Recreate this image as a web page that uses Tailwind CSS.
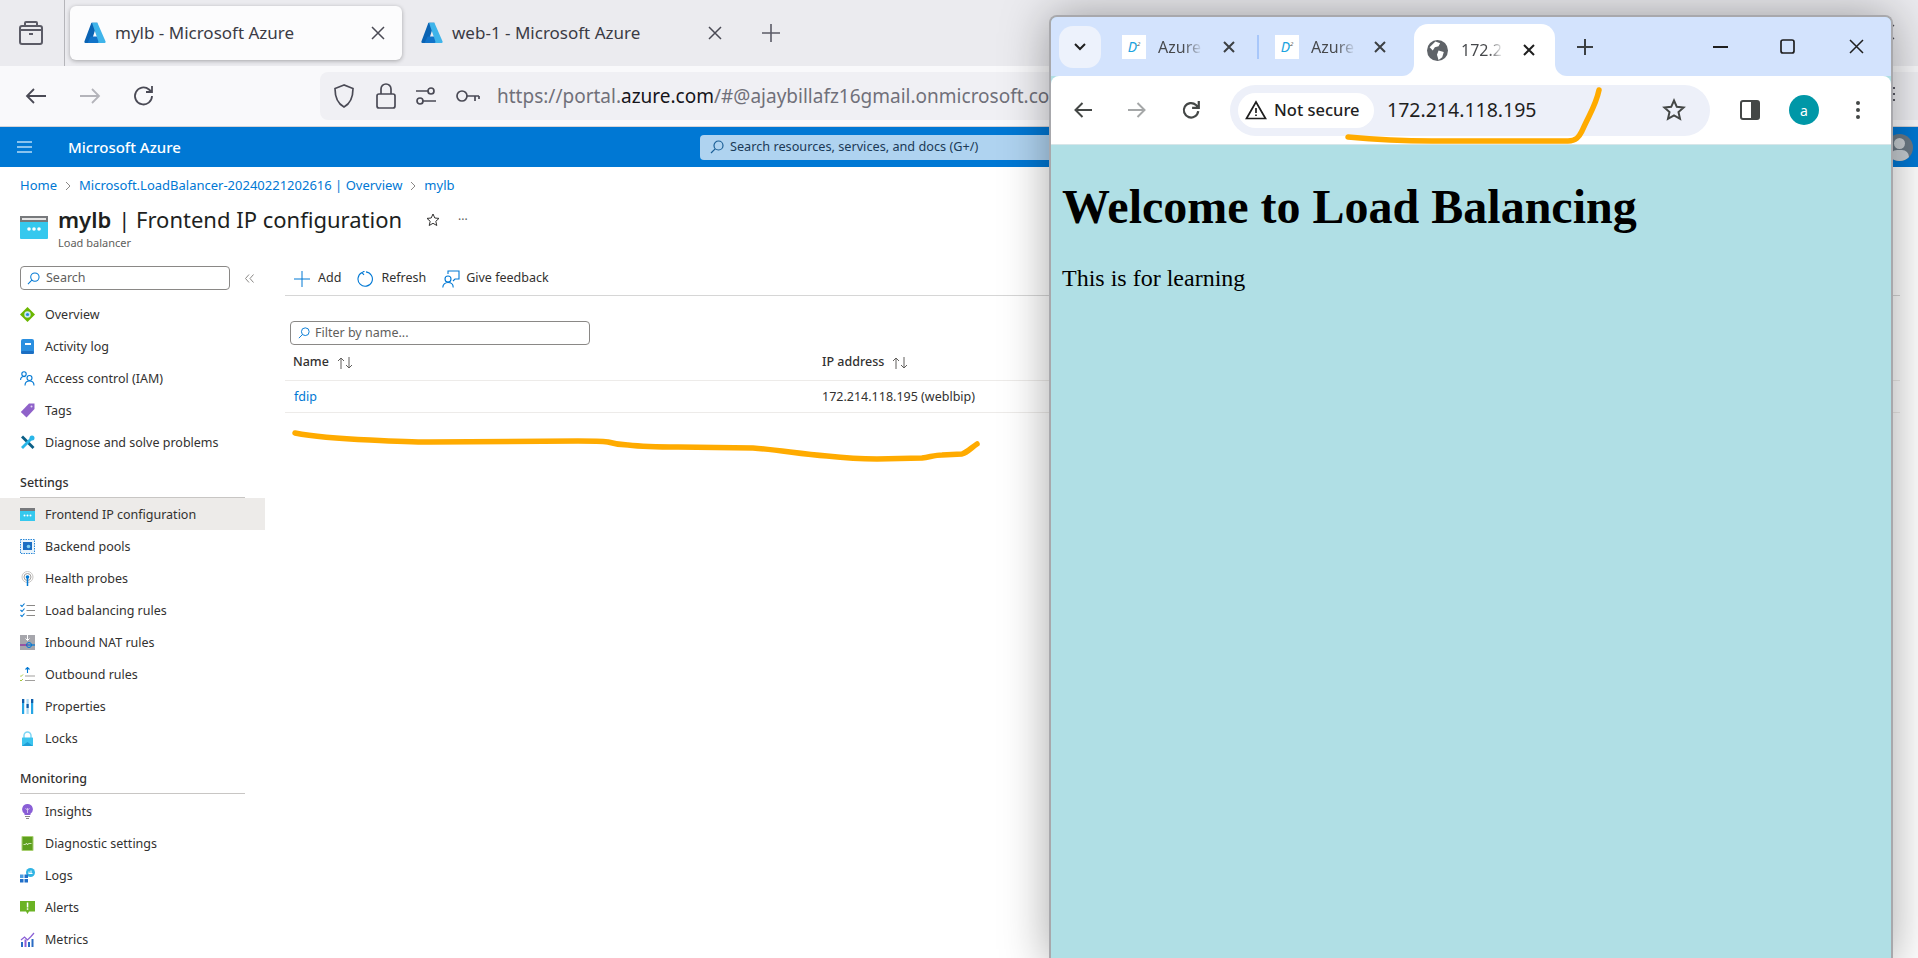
<!DOCTYPE html>
<html lang="en">
<head>
  <meta charset="UTF-8" />
  <title>mylb - Microsoft Azure</title>
  <script src="https://cdn.jsdelivr.net/npm/@tailwindcss/browser@4"></script>
</head>
<body class="relative w-[1918px] h-[958px] overflow-hidden bg-white font-['Noto_Sans',sans-serif] text-[#323130]">

  <!-- Firefox tab strip -->
  <div class="flex items-center h-[66px] bg-[#ebebef]">
    <div class="flex items-center justify-center w-[65px] h-full border-r border-[#b5b5ba] pr-[3px]">
      <svg class="w-[24px] h-[26px]" viewBox="0 0 24 26" fill="none" stroke="#5b5b66" stroke-width="2"><path d="M6 5V3a1 1 0 0 1 1-1h10a1 1 0 0 1 1 1v2"/><rect x="1" y="6" width="22" height="18" rx="2"/><path d="M1 10h22"/><path d="M10 14h4"/></svg>
    </div>
    <div class="flex items-center w-[332px] h-[54px] ml-[5px] pl-[14px] bg-[#fcfcfd] rounded-md shadow-[0_1px_4px_rgba(0,0,0,0.3)]">
      <svg class="w-[22px] h-[22px] shrink-0" viewBox="0 0 22 22"><path d="M7.4.8h6L7.2 20.2a1 1 0 0 1-1 .7H1.3a1 1 0 0 1-.9-1.3z" fill="#0a63b3"/><path d="M16.6 14.4H6.6l-3 6.5h14.6z" fill="#1173c9"/><path d="M13.4.8 21.6 19.6a1 1 0 0 1-.9 1.3h-7.2a1 1 0 0 0 .9-1.3L8 .8z" fill="#3fb4ea"/></svg>
      <span class="ml-[9px] text-[17px] text-[#3b3b45] whitespace-nowrap">mylb - Microsoft Azure</span>
      <svg class="w-[14px] h-[14px] ml-auto mr-[17px]" viewBox="0 0 14 14" stroke="#4a4a55" stroke-width="1.5"><path d="M1 1l12 12M13 1 1 13"/></svg>
    </div>
    <div class="flex items-center w-[332px] h-[54px] ml-[5px] pl-[14px]">
      <svg class="w-[22px] h-[22px] shrink-0" viewBox="0 0 22 22"><path d="M7.4.8h6L7.2 20.2a1 1 0 0 1-1 .7H1.3a1 1 0 0 1-.9-1.3z" fill="#0a63b3"/><path d="M16.6 14.4H6.6l-3 6.5h14.6z" fill="#1173c9"/><path d="M13.4.8 21.6 19.6a1 1 0 0 1-.9 1.3h-7.2a1 1 0 0 0 .9-1.3L8 .8z" fill="#3fb4ea"/></svg>
      <span class="ml-[9px] text-[17px] text-[#3b3b45] whitespace-nowrap">web-1 - Microsoft Azure</span>
      <svg class="w-[14px] h-[14px] ml-auto mr-[17px]" viewBox="0 0 14 14" stroke="#4a4a55" stroke-width="1.5"><path d="M1 1l12 12M13 1 1 13"/></svg>
    </div>
    <svg class="w-[20px] h-[20px] ml-[22px]" viewBox="0 0 20 20" stroke="#5b5b66" stroke-width="1.6"><path d="M10 1v18M1 10h18"/></svg>
    <svg class="w-[16px] h-[16px] ml-auto mr-[23px] mb-[2px]" viewBox="0 0 16 16" stroke="#4a4a55" stroke-width="1.2"><path d="m1 1 14 14M15 1 1 15"/></svg>
  </div>

  <!-- Firefox address row -->
  <div class="relative flex items-center h-[61px] bg-[#f9f9fb] border-b border-[#d4d4d8]">
    <div class="flex items-center w-[320px] shrink-0 pl-[24px] gap-[30px]">
      <svg class="w-[24px] h-[24px]" viewBox="0 0 24 24" fill="none" stroke="#4a4a55" stroke-width="1.8"><path d="M22 12H3M10 5l-7 7 7 7"/></svg>
      <svg class="w-[24px] h-[24px]" viewBox="0 0 24 24" fill="none" stroke="#b4b4ba" stroke-width="1.8"><path d="M2 12h19M14 5l7 7-7 7"/></svg>
      <svg class="w-[24px] h-[24px]" viewBox="0 0 24 24" fill="none" stroke="#4a4a55" stroke-width="1.8"><path d="M20 12a8.5 8.5 0 1 1-3-6.5L20 8M20 2v6h-6"/></svg>
    </div>
    <div class="flex items-center flex-1 h-[48px] bg-[#f0f0f4] rounded-l-lg pl-[12px] text-[19px] whitespace-nowrap overflow-hidden">
      <svg class="w-[24px] h-[26px] shrink-0" viewBox="0 0 24 26" fill="none" stroke="#4a4a55" stroke-width="1.7"><path d="M12 2 3 5.5c0 8 1.5 14.500 9 18.500 7.500-4 9-10.500 9-18.500z"/></svg>
      <svg class="w-[20px] h-[26px] shrink-0 ml-[20px]" viewBox="0 0 20 26" fill="none" stroke="#4a4a55" stroke-width="1.7"><rect x="1" y="11" width="18" height="14" rx="2"/><path d="M5 11V6a5 5 0 0 1 10 0v5"/></svg>
      <svg class="w-[22px] h-[20px] shrink-0 ml-[19px]" viewBox="0 0 22 20" fill="none" stroke="#4a4a55" stroke-width="1.7"><circle cx="16" cy="5" r="3"/><path d="M1 5h12"/><circle cx="5" cy="15" r="3"/><path d="M8 15h13"/></svg>
      <svg class="w-[24px] h-[14px] shrink-0 ml-[19px]" viewBox="0 0 24 14" fill="none" stroke="#4a4a55" stroke-width="1.7"><circle cx="6" cy="7" r="5"/><path d="M11 7h12M19 7v5M23 7v3"/></svg>
      <span class="ml-[17px] text-[#70707a]">https://portal.<span class="text-[#15141a]">azure.com</span>/#@ajaybillafz16gmail.onmicrosoft.com/resource</span>
    </div>
    <svg class="absolute left-[1890px] top-[21px] w-[5px] h-[15px]" viewBox="0 0 5 15" fill="#5b5b66"><rect width="5" height="2"/><rect y="6" width="5" height="2"/><rect y="12" width="5" height="2"/></svg>
  </div>

  <!-- Azure top bar -->
  <div class="flex items-center h-[40px] bg-[#0078d4] text-white">
    <svg class="w-[15px] h-[12px] ml-[17px]" viewBox="0 0 15 12" fill="none" stroke="#b7dcf6" stroke-width="1.5"><path d="M0 1h15M0 6h15M0 11h15"/></svg>
    <span class="ml-[36px] w-[632px] text-[15px] font-medium">Microsoft Azure</span>
    <div class="flex items-center w-[1170px] h-[25px] bg-[#afd3f0] rounded-sm pl-[10px] text-[12.7px] text-[#1b3a57]">
      <svg class="w-[14px] h-[14px]" viewBox="0 0 14 14" fill="none" stroke="#1b5f96" stroke-width="1.2"><circle cx="8.500" cy="5.500" r="4.500"/><path d="M5.200 8.800 1 13"/></svg>
      <span class="ml-[6px]">Search resources, services, and docs (G+/)</span>
    </div>
    <div class="relative ml-auto mr-[5px] w-[27px] h-[27px] rounded-full bg-[#6c7a86] overflow-hidden">
      <div class="absolute top-[4px] left-[8px] w-[11px] h-[11px] rounded-full bg-[#c8ced3]"></div>
      <div class="absolute top-[16px] left-[4px] w-[19px] h-[14px] rounded-full bg-[#c8ced3]"></div>
    </div>
  </div>

  <!-- Breadcrumb -->
  <div class="flex items-center h-[37px] pl-[20px] text-[13px] text-[#0078d4] whitespace-nowrap">
    <span>Home</span>
    <svg class="w-[6px] h-[10px] mx-[8px]" viewBox="0 0 6 10" fill="none" stroke="#8a8886"><path d="m1 1 4 4-4 4"/></svg>
    <span>Microsoft.LoadBalancer-20240221202616 | Overview</span>
    <svg class="w-[6px] h-[10px] mx-[8px]" viewBox="0 0 6 10" fill="none" stroke="#8a8886"><path d="m1 1 4 4-4 4"/></svg>
    <span>mylb</span>
  </div>

  <!-- Blade title -->
  <div class="relative h-[47px] pl-[58px]">
    <svg class="absolute left-[20px] top-[12px] w-[28px] h-[23px]" viewBox="0 0 28 23"><rect width="28" height="23" rx="1" fill="#35c8ee"/><rect width="28" height="6" fill="#77797c"/><rect x="2" y="2" width="24" height="2" fill="#e6e6e6"/><circle cx="9" cy="13" r="1.800" fill="#fff"/><circle cx="14" cy="13" r="1.800" fill="#fff"/><circle cx="19" cy="13" r="1.800" fill="#fff"/></svg>
    <div class="flex items-center h-[31px] text-[22px] text-[#201f1e] whitespace-nowrap">
      <span class="font-semibold">mylb</span><span class="ml-[7px]">| Frontend IP configuration</span>
      <svg class="w-[14px] h-[14px] ml-[24px]" viewBox="0 0 14 14" fill="none" stroke="#323130"><path d="m7 1 1.800 4 4.200.4-3.200 2.900 1 4.200L7 10.300l-3.800 2.200 1-4.200L1 5.400 5.200 5z"/></svg>
      <span class="ml-[18px] text-[12px] text-[#605e5c] leading-none">···</span>
    </div>
    <div class="text-[11px] leading-[16px] text-[#605e5c]">Load balancer</div>
  </div>

  <div class="flex">
    <!-- Resource menu -->
    <aside class="w-[265px] shrink-0 pt-[15px] text-[12.5px]">
      <div class="flex items-center pl-[20px]">
        <div class="flex items-center w-[210px] h-[24px] border border-[#8a8886] rounded-sm pl-[6px] text-[#605e5c]">
          <svg class="w-[13px] h-[13px]" viewBox="0 0 14 14" fill="none" stroke="#0078d4" stroke-width="1.100"><circle cx="8.500" cy="5.500" r="4.500"/><path d="M5.200 8.800 1 13"/></svg>
          <span class="ml-[6px]">Search</span>
        </div>
        <svg class="w-[9px] h-[9px] ml-[15px]" viewBox="0 0 9 9" fill="none" stroke="#8a8886"><path d="M4 .5.500 4.500 4 8.500M8.500 .5 5 4.500l3.500 4"/></svg>
      </div>
      <nav class="mt-[8px] [&_span]:pt-[2px]">
        <a class="flex items-center h-[32px] pl-[20px]"><svg class="w-[15px] h-[15px] shrink-0" viewBox="0 0 15 15"><path d="M7.500 0 15 7.500 7.500 15 0 7.500z" fill="#6bb700"/><circle cx="7.500" cy="7.500" r="3.200" fill="#cfe8f5"/><circle cx="7.500" cy="7.500" r="1.600" fill="#2b88d8"/></svg><span class="ml-[10px]">Overview</span></a>
        <a class="flex items-center h-[32px] pl-[20px]"><svg class="w-[15px] h-[15px] shrink-0" viewBox="0 0 15 15"><rect x="1" width="13" height="15" rx="2" fill="#2b8fe0"/><rect x="1" y="12" width="13" height="3" rx="1.500" fill="#1b6ec2"/><rect x="5" y="4" width="6" height="2" fill="#fff"/></svg><span class="ml-[10px]">Activity log</span></a>
        <a class="flex items-center h-[32px] pl-[20px]"><svg class="w-[15px] h-[15px] shrink-0" viewBox="0 0 15 15" fill="none" stroke="#0078d4" stroke-width="1.100"><circle cx="4" cy="3" r="2.200"/><path d="M.6 9c0-2 1.500-3.500 3.400-3.500 .6 0 1 .1 1.500.3"/><circle cx="9.500" cy="7" r="2.500"/><path d="M5 14.500c0-3 2-4.500 4.500-4.500s4.500 1.500 4.500 4.500"/></svg><span class="ml-[10px]">Access control (IAM)</span></a>
        <a class="flex items-center h-[32px] pl-[20px]"><svg class="w-[15px] h-[15px] shrink-0" viewBox="0 0 15 15"><path d="M9 .5h5.500V6L6.500 14.500.8 9z" fill="#8f62c9"/><circle cx="11.500" cy="3.500" r="1" fill="#e2d5f3"/></svg><span class="ml-[10px]">Tags</span></a>
        <a class="flex items-center h-[32px] pl-[20px]"><svg class="w-[15px] h-[15px] shrink-0" viewBox="0 0 15 15" fill="none" stroke-width="2.800"><path d="M2 1.500 13.500 13" stroke="#0b5f86"/><path d="M13 2 2 13" stroke="#29b6e8"/><circle cx="12" cy="3" r="2.500" fill="#29b6e8" stroke="none"/></svg><span class="ml-[10px]">Diagnose and solve problems</span></a>

        <div class="h-[40px] mx-[20px] pt-[17px] leading-[16px] font-medium border-b border-[#c8c6c4]">Settings</div>
        <a class="flex items-center h-[32px] pl-[20px] bg-[#edebe9]"><svg class="w-[15px] h-[13px] shrink-0" viewBox="0 0 15 13"><rect width="15" height="13" fill="#35c8ee"/><rect width="15" height="3" fill="#77797c"/><circle cx="4.500" cy="7.500" r="1" fill="#fff"/><circle cx="7.500" cy="7.500" r="1" fill="#fff"/><circle cx="10.500" cy="7.500" r="1" fill="#fff"/></svg><span class="ml-[10px]">Frontend IP configuration</span></a>
        <a class="flex items-center h-[32px] pl-[20px]"><svg class="w-[15px] h-[15px] shrink-0" viewBox="0 0 15 15"><rect x=".5" y=".5" width="14" height="14" fill="#eaf4fb" stroke="#2b88d8" stroke-dasharray="1.500 1"/><rect x="3" y="3" width="9" height="8" fill="#1b6ec2"/><circle cx="8.500" cy="7.500" r="1.800" fill="#7fd0f2"/></svg><span class="ml-[10px]">Backend pools</span></a>
        <a class="flex items-center h-[32px] pl-[20px]"><svg class="w-[15px] h-[15px] shrink-0" viewBox="0 0 15 15" fill="none"><circle cx="7.500" cy="6" r="5.500" stroke="#c8c6c4"/><circle cx="7.500" cy="6" r="3.500" stroke="#a19f9d"/><circle cx="7.500" cy="6" r="1.800" fill="#0078d4"/><path d="M7.500 7v8" stroke="#0078d4" stroke-width="1.500"/></svg><span class="ml-[10px]">Health probes</span></a>
        <a class="flex items-center h-[32px] pl-[20px]"><svg class="w-[15px] h-[15px] shrink-0" viewBox="0 0 15 15" fill="none" stroke-width="1.100"><path d="m.5 2 1.500 1.500L4.500.5M.5 7 2 8.500l2.500-3M.5 12 2 13.500l2.500-3" stroke="#0078d4"/><path d="M6.500 2.500H15M6.500 7.500H15M6.500 12.500H15" stroke="#8a8886"/></svg><span class="ml-[10px]">Load balancing rules</span></a>
        <a class="flex items-center h-[32px] pl-[20px]"><svg class="w-[15px] h-[15px] shrink-0" viewBox="0 0 15 15" fill="none"><rect width="15" height="15" fill="#a6a6ac"/><path d="M7.500 0v5M5.500 3.500l2 2 2-2" stroke="#fff"/><path d="M0 10h8" stroke="#8b1e9e" stroke-width="1.200"/><path d="M8 10h7" stroke="#0078d4" stroke-width="1.200"/><circle cx="9" cy="10" r="2.500" stroke="#0078d4"/></svg><span class="ml-[10px]">Inbound NAT rules</span></a>
        <a class="flex items-center h-[32px] pl-[20px]"><svg class="w-[15px] h-[15px] shrink-0" viewBox="0 0 15 15" fill="none"><path d="M7.500 6V.5M5.500 2.500l2-2 2 2" stroke="#0078d4" stroke-width="1.100"/><path d="M5 9h10M5 13.500h10" stroke="#a19f9d"/><path d="m0 8.500 1 1 2-2M0 13l1 1 2-2" stroke="#a4c639"/></svg><span class="ml-[10px]">Outbound rules</span></a>
        <a class="flex items-center h-[32px] pl-[20px]"><svg class="w-[15px] h-[15px] shrink-0" viewBox="0 0 15 15"><rect x="2" width="2.200" height="15" fill="#27a6e5"/><rect x="6.500" width="2.200" height="15" fill="#a9d8f3"/><rect x="11" width="2.200" height="15" fill="#27a6e5"/><rect x="2" width="2.200" height="4" fill="#0f5ca8"/><rect x="6.500" y="5" width="2.200" height="4" fill="#0f5ca8"/><rect x="11" width="2.200" height="4" fill="#0f5ca8"/></svg><span class="ml-[10px]">Properties</span></a>
        <a class="flex items-center h-[32px] pl-[20px]"><svg class="w-[15px] h-[15px] shrink-0" viewBox="0 0 15 15" fill="none"><path d="M4 7V4.500a3.500 3.500 0 0 1 7 0V7" stroke="#7fd6f5" stroke-width="1.500"/><rect x="2" y="6.500" width="11" height="8.500" rx=".5" fill="#3cc4ee"/><path d="m2 15 5.500-4 5.500 4z" fill="#1e9ed6"/></svg><span class="ml-[10px]">Locks</span></a>

        <div class="h-[40px] mx-[20px] pt-[17px] leading-[16px] font-medium border-b border-[#c8c6c4] mb-px">Monitoring</div>
        <a class="flex items-center h-[32px] pl-[20px]"><svg class="w-[15px] h-[15px] shrink-0" viewBox="0 0 15 15"><path d="M7.500 0a5.300 5.300 0 0 1 3 9.700V11h-6V9.700A5.300 5.300 0 0 1 7.500 0z" fill="#8a5fd6"/><path d="M5 12h5v1H5zM6 14h3v1H6z" fill="#8a8886"/><path d="M7.500 4v5M5.500 4.500l2 1.500 2-1.500" stroke="#e2d5f3" fill="none" stroke-width=".8"/></svg><span class="ml-[10px]">Insights</span></a>
        <a class="flex items-center h-[32px] pl-[20px]"><svg class="w-[15px] h-[15px] shrink-0" viewBox="0 0 15 15"><rect x="1.500" width="12" height="15" rx="1" fill="#a8cf70"/><rect x="2.500" y="1" width="10" height="13" fill="#5ea01e"/><path d="m3.500 8.500 2 0 1-1.500 1 2 1-1.500h3" stroke="#e8f5d8" fill="none" stroke-width=".8"/></svg><span class="ml-[10px]">Diagnostic settings</span></a>
        <a class="flex items-center h-[32px] pl-[20px]"><svg class="w-[15px] h-[15px] shrink-0" viewBox="0 0 15 15"><circle cx="10.500" cy="4.500" r="4.500" fill="#30b4e4"/><path d="M8.500 5.500h4M9 3.500v2M11 2.500v3" stroke="#fff" fill="none"/><rect y="6.500" width="3.500" height="3.500" fill="#4a9be0"/><rect x="4.500" y="6.500" width="3.500" height="3.500" fill="#1f6ec9"/><rect y="11" width="3.500" height="3.500" fill="#1f6ec9"/><rect x="4.500" y="11" width="3.500" height="3.500" fill="#1f6ec9"/></svg><span class="ml-[10px]">Logs</span></a>
        <a class="flex items-center h-[32px] pl-[20px]"><svg class="w-[15px] h-[15px] shrink-0" viewBox="0 0 15 15"><path d="M0 1h15v10.500H9l-1.500 2.500L6 11.500H0z" fill="#6bb324"/><rect x="6.800" y="2.500" width="1.500" height="5" fill="#fff"/><rect x="6.800" y="8.300" width="1.500" height="1.500" fill="#fff"/></svg><span class="ml-[10px]">Alerts</span></a>
        <a class="flex items-center h-[32px] pl-[20px]"><svg class="w-[15px] h-[15px] shrink-0" viewBox="0 0 15 15" fill="none"><path d="M1 8l3.500-3 3 3 3.500-3.500L14 1" stroke="#8a5fd6" stroke-width="1.200"/><rect x="1" y="10" width="2" height="5" fill="#2b6cc4"/><rect x="4.500" y="7.500" width="2" height="7.500" fill="#8a5fd6"/><rect x="8" y="10" width="2" height="5" fill="#2b6cc4"/><rect x="11.500" y="7" width="2" height="8" fill="#2b6cc4"/></svg><span class="ml-[10px]">Metrics</span></a>
      </nav>
    </aside>

    <!-- Blade content -->
    <main class="flex-1 ml-[20px] mr-[18px] text-[12.5px]">
      <div class="flex items-center h-[45px] pt-[11px] pl-[9px] border-b border-[#d6d6d6]">
        <svg class="w-[16px] h-[16px]" viewBox="0 0 16 16" stroke="#0078d4"><path d="M8 0v16M0 8h16"/></svg>
        <span class="ml-[8px]">Add</span>
        <svg class="w-[16px] h-[16px] ml-[16px]" viewBox="0 0 16 16" fill="none" stroke="#0078d4" stroke-width="1.100"><path d="M5 1.600A7.200 7.200 0 1 0 9 .9M5 1.600 7.500 0M5 1.600l2 2.200"/></svg>
        <span class="ml-[8px]">Refresh</span>
        <svg class="w-[18px] h-[18px] ml-[16px]" viewBox="0 0 18 18" fill="none" stroke="#0078d4" stroke-width="1.100"><circle cx="6" cy="9" r="3"/><path d="M.8 17.500c0-3 2.200-5 5.200-5s5.200 2 5.200 5M6 4V1h11v8h-4l-2 2"/></svg>
        <span class="ml-[6px]">Give feedback</span>
      </div>
      <div class="flex items-center w-[300px] h-[24px] mt-[25px] ml-[5px] border border-[#8a8886] rounded-sm pl-[7px] text-[#605e5c]">
        <svg class="w-[12px] h-[12px]" viewBox="0 0 14 14" fill="none" stroke="#0078d4" stroke-width="1.100"><circle cx="8.500" cy="5.500" r="4.500"/><path d="M5.200 8.800 1 13"/></svg>
        <span class="ml-[5px]">Filter by name...</span>
      </div>
      <div class="grid grid-cols-[537px_1fr] h-[36px] items-center border-b border-[#edebe9] font-medium">
        <div class="flex items-center pl-[8px]">Name
          <svg class="w-[16px] h-[12px] ml-[8px]" viewBox="0 0 16 12" fill="none" stroke="#605e5c"><path d="M4 12V1M1 4l3-3 3 3M12 0v11M9 8l3 3 3-3"/></svg>
        </div>
        <div class="flex items-center">IP address
          <svg class="w-[16px] h-[12px] ml-[8px]" viewBox="0 0 16 12" fill="none" stroke="#605e5c"><path d="M4 12V1M1 4l3-3 3 3M12 0v11M9 8l3 3 3-3"/></svg>
        </div>
      </div>
      <div class="grid grid-cols-[537px_1fr] h-[32px] pt-[2px] items-center border-b border-[#edebe9]">
        <div class="pl-[9px] text-[#0078d4]">fdip</div>
        <div class="whitespace-nowrap">172.214.118.195 (weblbip)</div>
      </div>
    </main>
  </div>

  <!-- Chrome window on top of the portal -->
  <div class="absolute left-[1049px] top-[15px] w-[844px] h-[950px] flex flex-col rounded-t-lg border-x-2 border-t-2 border-[#a8a8ac] bg-[#b0dfe5] shadow-[0_0_48px_rgba(0,0,0,0.35)] overflow-hidden">
    <div class="flex items-center h-[59px] shrink-0 bg-[#d3e3fd] text-[#1f1f1f]">
      <div class="flex items-center justify-center w-[42px] h-[42px] ml-[8px] rounded-[14px] bg-[#edf2fc]">
        <svg class="w-[12px] h-[8px]" viewBox="0 0 12 8" fill="none" stroke="#1f1f1f" stroke-width="2"><path d="m1 1 5 5 5-5"/></svg>
      </div>
      <div class="flex items-center justify-center w-[24px] h-[24px] ml-[21px] bg-white text-[#1aa3e0] text-[14px] italic">D<sup class="text-[6px] text-[#555]">2</sup></div>
      <span class="ml-[12px] w-[45px] text-[16px] overflow-hidden bg-linear-to-r from-[#45474a] from-55% to-[#d3e3fd] bg-clip-text text-transparent">Azure</span>
      <svg class="w-[12px] h-[12px] ml-[20px]" viewBox="0 0 12 12" stroke="#3c4043" stroke-width="2"><path d="m1 1 10 10M11 1 1 11"/></svg>
      <div class="w-[2px] h-[24px] ml-[22px] bg-[#a8c7fa]"></div>
      <div class="flex items-center justify-center w-[24px] h-[24px] ml-[16px] bg-white text-[#1aa3e0] text-[14px] italic">D<sup class="text-[6px] text-[#555]">2</sup></div>
      <span class="ml-[12px] w-[45px] text-[16px] overflow-hidden bg-linear-to-r from-[#45474a] from-55% to-[#d3e3fd] bg-clip-text text-transparent">Azure</span>
      <svg class="w-[12px] h-[12px] ml-[18px]" viewBox="0 0 12 12" stroke="#3c4043" stroke-width="2"><path d="m1 1 10 10M11 1 1 11"/></svg>
      <div class="relative flex items-center self-end w-[141px] h-[52px] ml-[28px] pl-[13px] bg-white rounded-t-[14px]">
        <div class="absolute bottom-0 left-[-12px] w-[12px] h-[12px] bg-white"><div class="w-full h-full rounded-br-xl bg-[#d3e3fd]"></div></div>
        <div class="absolute bottom-0 right-[-12px] w-[12px] h-[12px] bg-white"><div class="w-full h-full rounded-bl-xl bg-[#d3e3fd]"></div></div>
        <svg class="w-[21px] h-[21px] shrink-0" viewBox="0 0 20 20"><circle cx="10" cy="10" r="10" fill="#5f6368"/><path d="M8 1.500 12.500 3 11 6 7.500 7l-2 3-3-3zM11 10l5 1.500-1.500 5L11 19l-1.500-5z" fill="#fff"/></svg>
        <span class="ml-[13px] text-[16px] w-[42px] overflow-hidden bg-linear-to-r from-[#45474a] from-65% to-white bg-clip-text text-transparent">172.2</span>
        <svg class="w-[12px] h-[12px] ml-[20px]" viewBox="0 0 12 12" stroke="#1f1f1f" stroke-width="2"><path d="m1 1 10 10M11 1 1 11"/></svg>
      </div>
      <svg class="w-[16px] h-[16px] ml-[22px]" viewBox="0 0 16 16" stroke="#3c4043" stroke-width="2"><path d="M8 0v16M0 8h16"/></svg>
      <svg class="w-[15px] h-[2px] ml-[120px]" viewBox="0 0 15 2"><rect width="15" height="2" fill="#1f1f1f"/></svg>
      <svg class="w-[15px] h-[15px] ml-[52px]" viewBox="0 0 15 15" fill="none" stroke="#1f1f1f" stroke-width="1.700"><rect x="1" y="1" width="13" height="13" rx="2"/></svg>
      <svg class="w-[15px] h-[15px] ml-[54px]" viewBox="0 0 15 15" stroke="#1f1f1f" stroke-width="1.500"><path d="m1 1 13 13M14 1 1 14"/></svg>
    </div>
    <div class="flex items-center h-[69px] shrink-0 bg-white rounded-t-lg border-b border-[#d7e6e9]">
      <svg class="w-[18px] h-[16px] ml-[23px]" viewBox="0 0 18 16" fill="none" stroke="#444746" stroke-width="2"><path d="M18 8H2M8.500 1 1.500 8l7 7"/></svg>
      <svg class="w-[18px] h-[16px] ml-[36px]" viewBox="0 0 18 16" fill="none" stroke="#a5a7a8" stroke-width="2"><path d="M0 8h16M9.500 1l7 7-7 7"/></svg>
      <svg class="w-[20px] h-[20px] ml-[35px]" viewBox="0 0 18 18" fill="none" stroke="#444746" stroke-width="2"><path d="M15.500 10a6.500 6.500 0 1 1-2-5.500L16 7M16 1v6h-6"/></svg>
      <div class="flex items-center w-[480px] h-[51px] ml-[29px] rounded-full bg-[#edf0f9] pl-[8px]">
        <div class="flex items-center w-[136px] h-[35px] rounded-full bg-white pl-[7px] text-[16.500px] font-medium text-[#1f1f1f] whitespace-nowrap">
          <svg class="w-[22px] h-[20px] shrink-0" viewBox="0 0 22 20" fill="none" stroke="#1f1f1f" stroke-width="1.700"><path d="M11 2 1.500 18.500h19z"/><path d="M11 8v5M11 14.500v1.500"/></svg>
          <span class="ml-[7px]">Not secure</span>
        </div>
        <span class="ml-[13px] text-[19.500px] text-[#1f1f1f]">172.214.118.195</span>
        <svg class="w-[24px] h-[24px] ml-auto mr-[24px]" viewBox="0 0 24 24" fill="none" stroke="#444746" stroke-width="2"><path d="m12 2.500 2.800 6.300 6.800.7-5.100 4.600 1.500 6.700L12 17.300l-6 3.500 1.500-6.700-5.100-4.600 6.800-.7z"/></svg>
      </div>
      <svg class="w-[20px] h-[20px] ml-[30px]" viewBox="0 0 20 20"><rect x="1" y="1" width="18" height="18" rx="2" fill="none" stroke="#444746" stroke-width="2"/><rect x="11" y="1" width="8" height="18" fill="#444746"/></svg>
      <div class="flex items-center justify-center w-[30px] h-[30px] ml-[29px] rounded-full bg-[#0097a7] text-white text-[14px]">a</div>
      <svg class="w-[6px] h-[20px] ml-[36px]" viewBox="0 0 6 20" fill="#444746"><circle cx="3" cy="3" r="2"/><circle cx="3" cy="10" r="2"/><circle cx="3" cy="17" r="2"/></svg>
    </div>
    <div class="flex-1 px-[11px] pt-[34px] text-black font-['Liberation_Serif',serif]">
      <h1 class="text-[48px] leading-[56px] font-bold whitespace-nowrap">Welcome to Load Balancing</h1>
      <p class="mt-[29px] text-[24px] leading-[28px]">This is for learning</p>
    </div>
  </div>

  <!-- Orange pen annotations -->
  <svg class="absolute inset-0 w-[1918px] h-[958px] pointer-events-none" viewBox="0 0 1918 958" fill="none" stroke="#ffab00" stroke-width="5.500" stroke-linecap="round" stroke-linejoin="round">
    <path d="M295 433C320 438 345 439 370 440 390 441 410 442 429 442L578 441C590 441 600 441 608 442 615 444 620 445 628 445 645 447 660 447 678 447L753 448C780 450 800 454 827 456 845 458 860 459 877 459L922 458C930 457 935 455 942 455L962 454C968 452 972 447 977 444"/>
    <path d="M1348 137C1380 140 1410 141 1432 141L1568 141C1576 141 1579 137 1582 131 1590 113 1596 105 1599 90"/>
  </svg>
</body>
</html>
